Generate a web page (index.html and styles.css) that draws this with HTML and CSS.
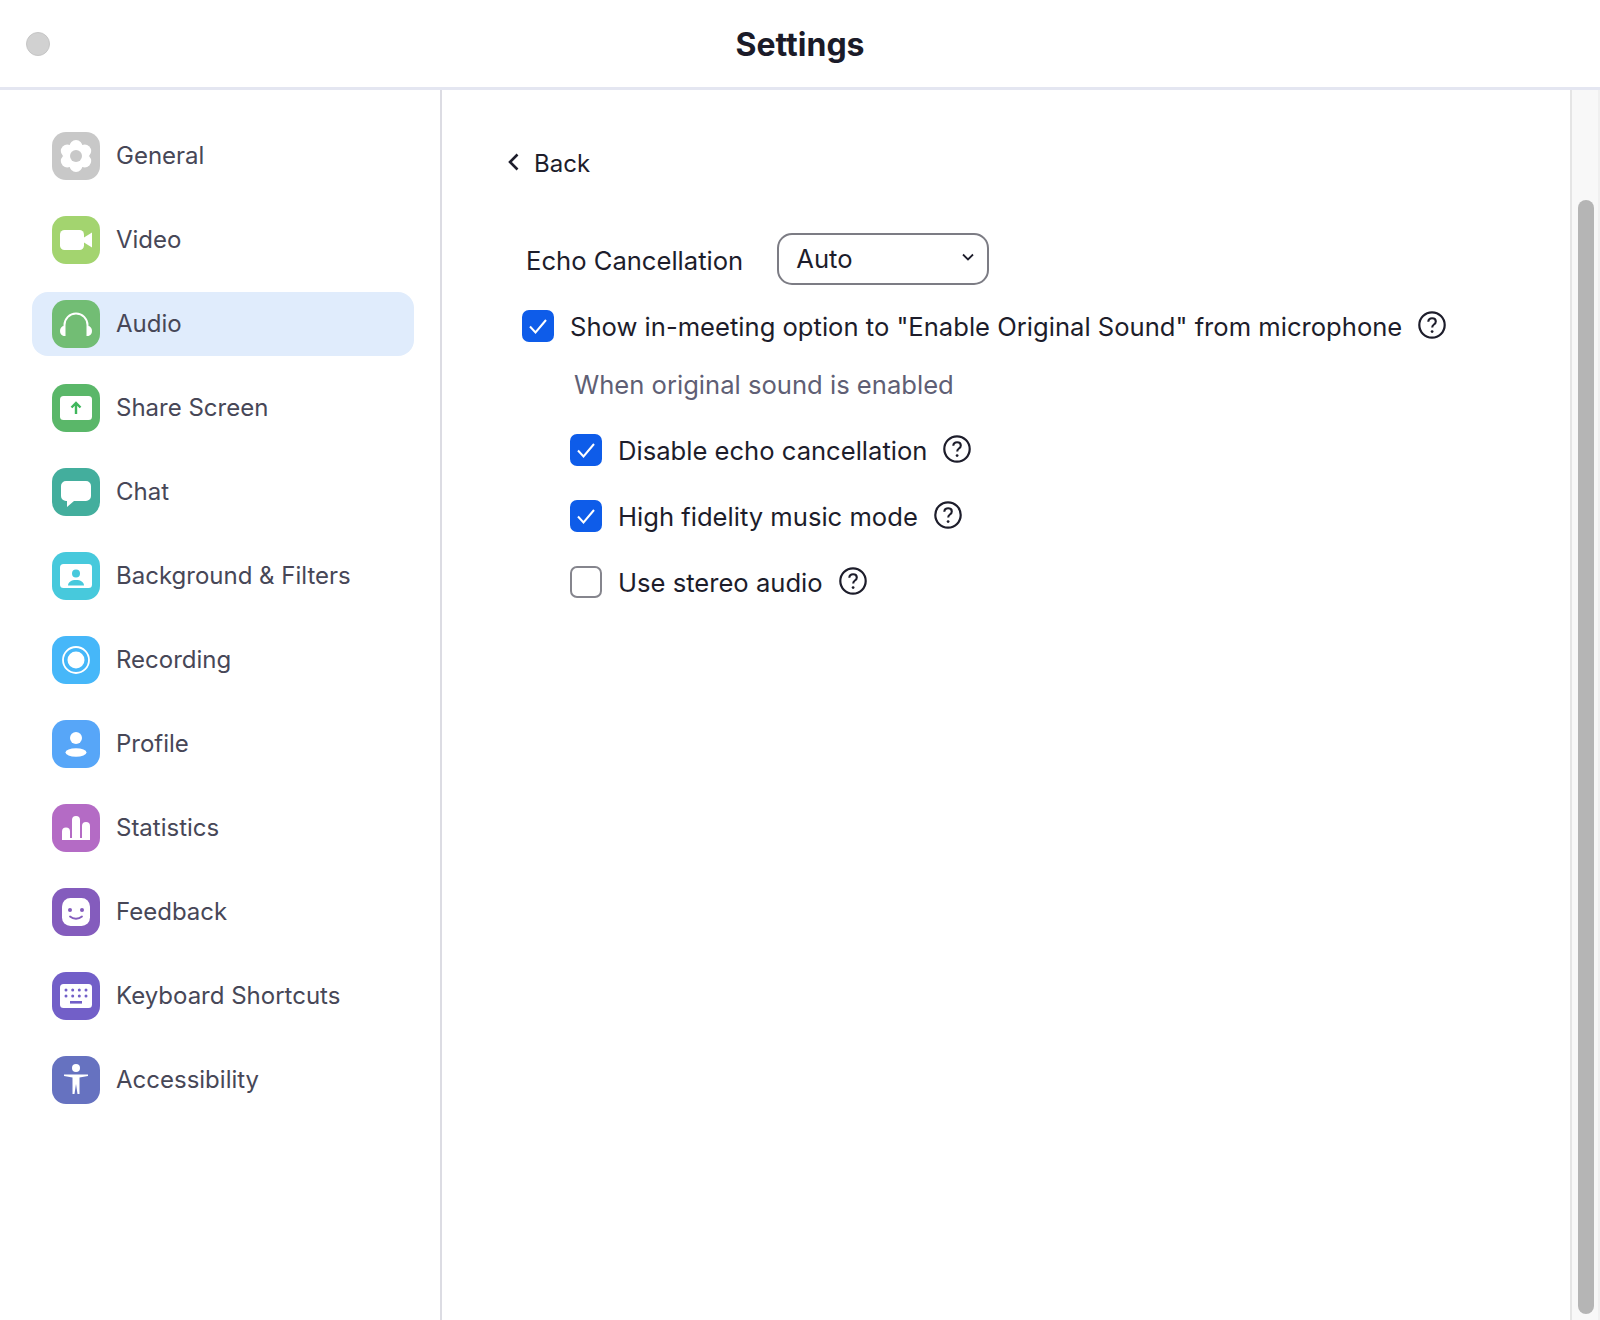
FILE: index.html
```html
<!DOCTYPE html>
<html lang="en">
<head>
  <meta charset="UTF-8">
  <title>Settings</title>
  <link rel="stylesheet" href="styles.css">
</head>
<body>

  <svg class="defs" width="0" height="0" aria-hidden="true">
    <symbol id="help" viewBox="0 0 28 28">
      <circle cx="14" cy="14" r="12.7" fill="none" stroke="#1d1d2b" stroke-width="2.200"/>
      <path d="M10.300 10.800c.1-2.300 1.700-3.600 3.800-3.600 2.200 0 3.700 1.300 3.700 3.200 0 1.500-.8 2.300-1.900 3.100-1.100.8-1.700 1.400-1.700 3" fill="none" stroke="#1d1d2b" stroke-width="2.100"/>
      <circle cx="14.100" cy="20.600" r="1.400" fill="#1d1d2b"/>
    </symbol>
    <symbol id="check" viewBox="0 0 32 32">
      <path d="M8 16.500l5.500 6L24 10" fill="none" stroke="#fff" stroke-width="2"/>
    </symbol>
  </svg>

  <header class="titlebar">
    <span class="close-dot"></span>
    <h1>Settings</h1>
  </header>

  <div class="window">
    <nav class="sidebar">
      <a class="nav-item">
        <span class="nav-icon">
          <svg viewBox="0 0 48 48"><rect width="48" height="48" rx="14" fill="#c8c8c8"/>
            <g fill="#fff"><circle cx="24" cy="14.500" r="6.500"/><circle cx="24" cy="33.500" r="6.500"/><circle cx="15.300" cy="19" r="6.500"/><circle cx="32.700" cy="19" r="6.500"/><circle cx="15.300" cy="29" r="6.500"/><circle cx="32.700" cy="29" r="6.500"/><circle cx="24" cy="24" r="10"/></g>
            <circle cx="24" cy="24" r="6" fill="#c8c8c8"/></svg>
        </span>
        General
      </a>
      <a class="nav-item">
        <span class="nav-icon">
          <svg viewBox="0 0 48 48"><rect width="48" height="48" rx="14" fill="#a3d46f"/>
            <rect x="8" y="14" width="24" height="20" rx="4.500" fill="#fff"/><path d="M32 21.500l8-5v15l-8-5z" fill="#fff"/></svg>
        </span>
        Video
      </a>
      <a class="nav-item active">
        <span class="nav-icon">
          <svg viewBox="0 0 48 48"><rect width="48" height="48" rx="14" fill="#72bd74"/>
            <path d="M12.500 36V25a11.500 11.500 0 0 1 23 0v11" fill="none" stroke="#fff" stroke-width="2"/>
            <path d="M12.500 26v10h-.5a4 5 0 0 1 0-10zM35.500 26v10h.5a4 5 0 0 0 0-10z" fill="#fff"/></svg>
        </span>
        Audio
      </a>
      <a class="nav-item">
        <span class="nav-icon">
          <svg viewBox="0 0 48 48"><rect width="48" height="48" rx="14" fill="#5ab769"/>
            <rect x="8" y="12" width="32" height="24" rx="3.500" fill="#fff"/>
            <path d="M24 30V19M19.500 23.500L24 19l4.500 4.500" fill="none" stroke="#3fb65c" stroke-width="2.400"/></svg>
        </span>
        Share Screen
      </a>
      <a class="nav-item">
        <span class="nav-icon">
          <svg viewBox="0 0 48 48"><rect width="48" height="48" rx="14" fill="#43ae9d"/>
            <path d="M14 13h20a5 5 0 0 1 5 5v10a5 5 0 0 1-5 5H22l-7 6v-6h-1a5 5 0 0 1-5-5V18a5 5 0 0 1 5-5z" fill="#fff"/></svg>
        </span>
        Chat
      </a>
      <a class="nav-item">
        <span class="nav-icon">
          <svg viewBox="0 0 48 48"><rect width="48" height="48" rx="14" fill="#47c9dc"/>
            <rect x="8" y="12" width="32" height="24" rx="3.500" fill="#fff"/>
            <circle cx="24" cy="21.500" r="4" fill="#47c9dc"/><path d="M16 33.500c0-3.500 3.500-5.500 8-5.500s8 2 8 5.500z" fill="#47c9dc"/></svg>
        </span>
        Background &amp; Filters
      </a>
      <a class="nav-item">
        <span class="nav-icon">
          <svg viewBox="0 0 48 48"><rect width="48" height="48" rx="14" fill="#46b7f9"/>
            <circle cx="24" cy="24" r="13" fill="none" stroke="#fff" stroke-width="1.800"/><circle cx="24" cy="24" r="8.500" fill="#fff"/></svg>
        </span>
        Recording
      </a>
      <a class="nav-item">
        <span class="nav-icon">
          <svg viewBox="0 0 48 48"><rect width="48" height="48" rx="14" fill="#57a6f8"/>
            <circle cx="24" cy="18" r="6" fill="#fff"/><ellipse cx="24" cy="32.500" rx="10.500" ry="4.200" fill="#fff"/></svg>
        </span>
        Profile
      </a>
      <a class="nav-item">
        <span class="nav-icon">
          <svg viewBox="0 0 48 48"><rect width="48" height="48" rx="14" fill="#b46bc5"/>
            <path d="M10 36V27.500a4 4 0 0 1 8 0V36zM20 36V16a4 4 0 0 1 8 0v20zM30 36V22a4 4 0 0 1 8 0v14z" fill="#fff"/><rect x="10" y="34" width="28" height="2" fill="#fff"/></svg>
        </span>
        Statistics
      </a>
      <a class="nav-item">
        <span class="nav-icon">
          <svg viewBox="0 0 48 48"><rect width="48" height="48" rx="14" fill="#845cbd"/>
            <rect x="10" y="10" width="28" height="28" rx="8.500" fill="#fff"/>
            <circle cx="18" cy="22" r="2" fill="#845cbd"/><circle cx="30" cy="22" r="2" fill="#845cbd"/>
            <path d="M18 28.500c3.500 3 8.500 3 12 0" fill="none" stroke="#845cbd" stroke-width="1.800" stroke-linecap="round"/></svg>
        </span>
        Feedback
      </a>
      <a class="nav-item">
        <span class="nav-icon">
          <svg viewBox="0 0 48 48"><rect width="48" height="48" rx="14" fill="#725fc8"/>
            <rect x="8" y="12" width="32" height="24" rx="3.500" fill="#fff"/>
            <g fill="#725fc8"><circle cx="14" cy="18" r="1.500"/><circle cx="20.700" cy="18" r="1.500"/><circle cx="27.300" cy="18" r="1.500"/><circle cx="34" cy="18" r="1.500"/><circle cx="14" cy="24" r="1.500"/><circle cx="20.700" cy="24" r="1.500"/><circle cx="27.300" cy="24" r="1.500"/><circle cx="34" cy="24" r="1.500"/><rect x="18" y="29" width="12" height="2.600"/></g></svg>
        </span>
        Keyboard Shortcuts
      </a>
      <a class="nav-item">
        <span class="nav-icon">
          <svg viewBox="0 0 48 48"><rect width="48" height="48" rx="14" fill="#6672c0"/>
            <circle cx="24" cy="12" r="4" fill="#fff"/>
            <path d="M12 18.500h24v1.500l-8.500 1.500V38h-2l-1.500-10-1.500 10h-2V21.500L12 20z" fill="#fff"/></svg>
        </span>
        Accessibility
      </a>
    </nav>

    <main class="content">
      <a class="back">
        <svg class="back-arrow" viewBox="0 0 14 18"><path d="M10.500 1.500L3 9l7.500 7.500" fill="none" stroke="#1d1d2b" stroke-width="2.600"/></svg>
        Back
      </a>

      <div class="echo-row">
        <label class="echo-label">Echo Cancellation</label>
        <div class="select">
          Auto
          <svg class="select-arrow" viewBox="0 0 12 8"><path d="M1 1.500l5 5 5-5" fill="none" stroke="#1d1d2b" stroke-width="1.800"/></svg>
        </div>
      </div>

      <div class="check-row first">
        <span class="box on"><svg viewBox="0 0 32 32"><use href="#check"/></svg></span>
        <span class="check-text">Show in-meeting option to "Enable Original Sound" from microphone</span>
        <svg class="help" viewBox="0 0 28 28"><use href="#help"/></svg>
      </div>

      <p class="sub-title">When original sound is enabled</p>

      <div class="sub-options">
        <div class="check-row">
          <span class="box on"><svg viewBox="0 0 32 32"><use href="#check"/></svg></span>
          <span class="check-text">Disable echo cancellation</span>
          <svg class="help" viewBox="0 0 28 28"><use href="#help"/></svg>
        </div>
        <div class="check-row">
          <span class="box on"><svg viewBox="0 0 32 32"><use href="#check"/></svg></span>
          <span class="check-text">High fidelity music mode</span>
          <svg class="help" viewBox="0 0 28 28"><use href="#help"/></svg>
        </div>
        <div class="check-row">
          <span class="box"></span>
          <span class="check-text">Use stereo audio</span>
          <svg class="help" viewBox="0 0 28 28"><use href="#help"/></svg>
        </div>
      </div>
    </main>

    <div class="scroll-track"><div class="scroll-thumb"></div></div>
  </div>

</body>
</html>
```

FILE: styles.css
```css
* { box-sizing: border-box; }
html, body { height: 100%; }
body { margin: 0; background: #fff; font-family: Inter, "Liberation Sans", sans-serif; color: #1d1d2b; overflow: hidden; }
.defs { display: block; height: 0; }

.titlebar { height: 90px; border-bottom: 3px solid #e4e6f1; display: flex; align-items: center; justify-content: center; position: relative; padding-top: 2px; }
.titlebar h1 { margin: 0; font-size: 32px; font-weight: 700; color: #1b1b29; }
.close-dot { position: absolute; left: 26px; top: 32px; width: 24px; height: 24px; border-radius: 50%; background: #d1d1d1; border: 1px solid #c6c6c6; }

.window { display: flex; height: 1230px; }

.sidebar { width: 442px; flex: none; border-right: 2px solid #dcdce3; padding: 34px 26px 0 32px; display: flex; flex-direction: column; gap: 20px; }
.nav-item { height: 64px; display: flex; align-items: center; gap: 16px; padding: 0 0 2px 20px; border-radius: 16px; font-size: 24px; color: #474757; }
.nav-item.active { background: #e0ecfc; }
.nav-icon { width: 48px; height: 48px; flex: none; margin-top: 2px; }
.nav-icon svg { display: block; width: 48px; height: 48px; }

.content { flex: 1; padding: 57px 0 0 65px; font-size: 25.6px; }
.back { display: flex; align-items: center; gap: 13px; height: 32px; font-size: 24px; color: #1d1d2b; }
.back-arrow { width: 14px; height: 18px; margin-top: -2px; }

.echo-row { display: flex; align-items: center; margin-top: 54px; padding-left: 19px; gap: 34px; }
.echo-label { line-height: 50px; padding-top: 3px; }
.select { width: 212px; height: 52px; border: 2px solid #7c7c84; border-radius: 15px; display: flex; align-items: center; justify-content: space-between; padding: 0 13px 0 17px; margin-top: -2px; }
.select-arrow { width: 12px; height: 8px; margin-top: -4px; }

.check-row { display: flex; align-items: center; height: 32px; }
.check-row.first { margin-top: 24px; margin-left: 15px; }
.box { width: 32px; height: 32px; flex: none; border: 2px solid #85858d; border-radius: 7px; }
.box.on { background: #0e5ce9; border: none; }
.box svg { display: block; width: 32px; height: 32px; }
.check-text { margin-left: 16px; white-space: nowrap; }
.help { width: 28px; height: 28px; flex: none; margin-left: 16px; margin-top: -3px; }

.sub-title { margin: 27px 0 0 67px; line-height: 32px; color: #5f5f75; }
.sub-options { margin: 33px 0 0 63px; display: flex; flex-direction: column; gap: 34px; }

.scroll-track { width: 30px; flex: none; background: #f8f8f8; border-left: 2px solid #e5e5e5; border-right: 2px solid #f0f0f0; padding: 110px 0 6px 6px; }
.scroll-thumb { width: 16px; height: 100%; border-radius: 8px; background: #b5b5b5; }
```
